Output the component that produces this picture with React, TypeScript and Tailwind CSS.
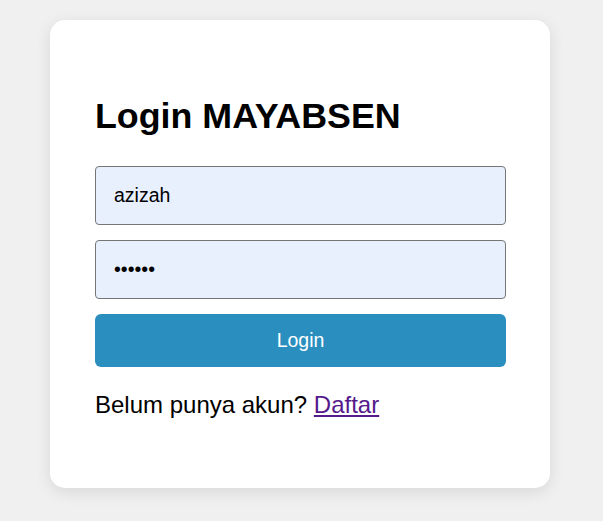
export default function App() {
  return (
    <div className="min-h-screen bg-[#f0f0f0] pt-[20px] pl-[50px] font-['Liberation_Sans',Arial,sans-serif]">
      <div className="w-[500px] bg-white rounded-[15px] shadow-[0_4px_16px_rgba(0,0,0,0.1)] pl-[45px] pr-[44px] pt-[46px] pb-[45px]">
        <h2 className="text-[35.8px] font-bold text-black leading-[40px] my-[30px]">
          Login MAYABSEN
        </h2>
        <form className="flex flex-col gap-[15px]" onSubmit={(e) => e.preventDefault()}>
          <input
            type="text"
            defaultValue="azizah"
            className="h-[59px] w-full border border-[#767676] rounded-[4px] bg-[#e8f0fe] px-[18px] text-[19.5px] text-black outline-none"
          />
          <input
            type="password"
            defaultValue="azizah"
            className="h-[59px] w-full border border-[#767676] rounded-[4px] bg-[#e8f0fe] px-[18px] text-[19.5px] text-black outline-none"
          />
          <button
            type="submit"
            className="h-[53px] w-full rounded-[6px] bg-[#2a8fbf] text-white text-[19.5px]"
          >
            Login
          </button>
        </form>
        <p className="text-[24px] text-black mt-[24px] mb-[24px] leading-[28px]">
          Belum punya akun?{" "}
          <a href="#" className="text-[#551a8b] underline">
            Daftar
          </a>
        </p>
      </div>
    </div>
  );
}
